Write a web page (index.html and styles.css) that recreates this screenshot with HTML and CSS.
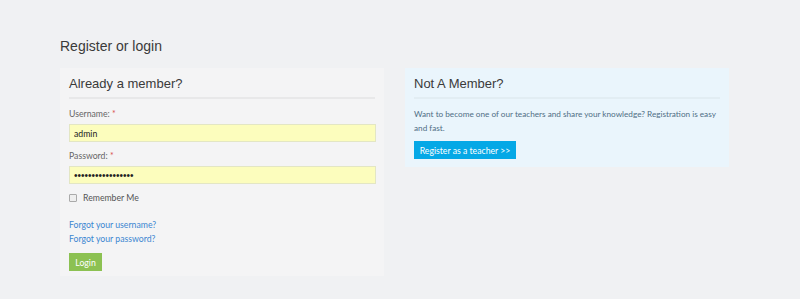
FILE: index.html
```html
<!DOCTYPE html>
<html>
<head>
<meta charset="utf-8">
<link rel="stylesheet" href="styles.css">
</head>
<body>
<div class="page">
  <h1 class="title">Register or login</h1>
  <div class="row">
    <div class="panel login">
      <h2 class="panel-head">Already a member?</h2>
      <form class="form">
        <label class="label">Username: <span class="req">*</span></label>
        <input class="input" type="text" value="admin">
        <label class="label">Password: <span class="req">*</span></label>
        <input class="input input-pass" type="password" value="adminadminadmin12">
        <div class="remember"><span class="check"></span><span>Remember Me</span></div>
        <div class="links">
          <a class="link" href="#">Forgot your username?</a>
          <a class="link" href="#">Forgot your password?</a>
        </div>
        <button class="btn btn-green" type="button">Login</button>
      </form>
    </div>
    <div class="panel register">
      <h2 class="panel-head">Not A Member?</h2>
      <p class="text">Want to become one of our teachers and share your knowledge? Registration is easy and fast.</p>
      <button class="btn btn-blue" type="button">Register as a teacher &gt;&gt;</button>
    </div>
  </div>
</div>
</body>
</html>
```
FILE: styles.css
```css
html, body {
  margin: 0;
  padding: 0;
  background: #f0f1f3;
  height: 299px;
  overflow: hidden;
}
body {
  font-family: Lato, "Open Sans", sans-serif;
  font-size: 8.7px;
}
.page {
  padding: 36px 0 0 60px;
  width: 670px;
}
.title {
  margin: 0 0 12px 0;
  font-family: "Liberation Sans", Arial, sans-serif;
  font-weight: normal;
  font-size: 14px;
  line-height: 20px;
  color: #3a3a3a;
}
.row {
  display: flex;
  gap: 21px;
  align-items: flex-start;
}
.panel {
  padding: 8px 9px 0 9px;
  box-sizing: border-box;
  display: flex;
  flex-direction: column;
  align-items: flex-start;
}
.login {
  width: 324px;
  height: 208px;
  background: #f4f4f5;
}
.register {
  width: 324px;
  height: 99px;
  background: #eaf5fc;
}
.panel-head {
  align-self: stretch;
  margin: 0;
  font-family: "Liberation Sans", Arial, sans-serif;
  font-weight: normal;
  font-size: 13px;
  line-height: 16px;
  color: #3a3a3a;
  padding-bottom: 5px;
  border-bottom: 2px solid #e8e8e9;
}
.register .panel-head {
  border-bottom-color: #e2edf3;
}
.form {
  align-self: stretch;
  display: flex;
  flex-direction: column;
  align-items: flex-start;
  padding-top: 9px;
}
.label {
  font-size: 8.7px;
  line-height: 12px;
  color: #666;
  margin-bottom: 4px;
}
.req { color: #d9534f; }
.input {
  box-sizing: border-box;
  width: 307px;
  height: 18px;
  margin: 0 0 8px 0;
  padding: 0 4px;
  border: 1px solid #e3e6c4;
  background: #fcfdbd;
  font-family: Lato, sans-serif;
  font-size: 8.7px;
  color: #222;
  outline: none;
}
.input-pass {
  font-family: "Liberation Sans", Arial, sans-serif;
  font-size: 10px;
  letter-spacing: 0;
}
.remember {
  display: flex;
  align-items: center;
  gap: 6px;
  line-height: 12px;
  color: #555;
}
.check {
  width: 6px;
  height: 6px;
  border: 1px solid #aaa;
  border-radius: 1px;
  background: #eee;
}
.links {
  display: flex;
  flex-direction: column;
  margin-top: 14px;
}
.link {
  line-height: 14px;
  color: #3b86d1;
  text-decoration: none;
}
.btn {
  display: block;
  border: none;
  color: #fff;
  font-family: Lato, sans-serif;
  font-size: 8.7px;
  height: 18px;
  padding: 0;
  cursor: pointer;
}
.btn-green {
  background: #8cc152;
  margin-top: 7px;
  width: 33px;
}
.text {
  margin: 8px 0 6px 0;
  font-size: 8.2px;
  line-height: 14px;
  color: #4f6e85;
}
.btn-blue {
  background: #05a8e6;
  width: 102px;
}
```
